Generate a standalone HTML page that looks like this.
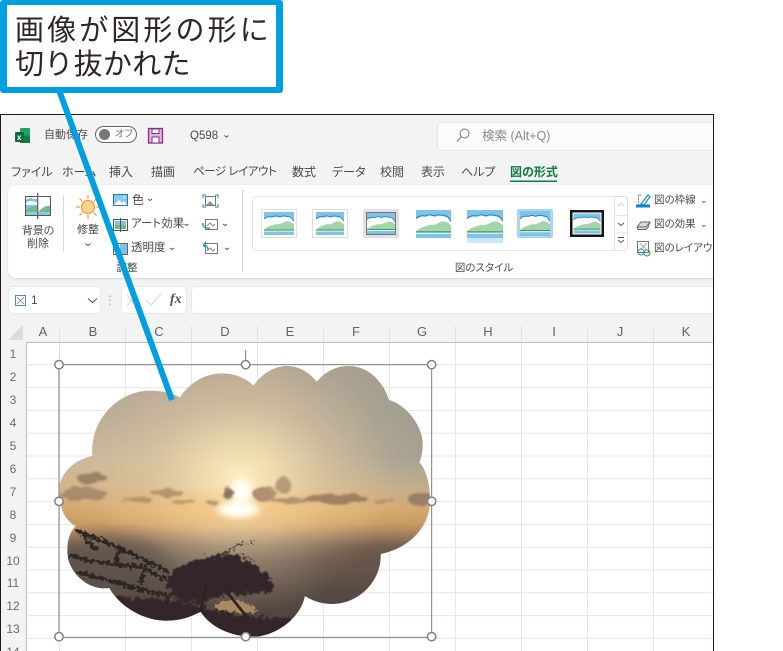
<!DOCTYPE html>
<html lang="ja"><head><meta charset="utf-8"><title>図の形式</title>
<style>
html,body{margin:0;padding:0;background:#fff}
body{width:783px;height:651px;position:relative;overflow:hidden;font-family:"Liberation Sans","Noto Sans CJK JP",sans-serif}
svg{position:absolute;display:block}
#win{position:absolute;left:0;top:114px;width:714px;height:537px;background:#f3f3f3;border:solid #231815;border-width:1.5px 1.5px 0 1.5px;box-sizing:border-box}
.p{position:absolute;background:#fff;box-sizing:border-box}
.t{position:absolute;white-space:nowrap;font-size:11px;line-height:14px;color:#4a4a4a;font-feature-settings:"palt"}
.tb{font-size:12px}
.c{transform:translateX(-50%)}
.h{color:#5a6470;font-size:13px;line-height:16px}
.r{color:#6a6a72;font-size:12px;line-height:14px}
#clip{position:absolute;left:0;top:0;width:713px;height:651px;overflow:hidden}
#call{position:absolute;left:0;top:0;width:283px;height:93px;box-sizing:border-box;background:#fff;border:solid #00a0e0;border-width:5.5px 7px 6.5px 7px;border-radius:3px}
.ct{position:absolute;left:15px;white-space:nowrap;font-size:29px;line-height:34px;color:#2f2725}
</style></head><body>
<div id="win"></div>
<div id="clip">
<div class="p" style="left:437px;top:122px;width:290px;height:29px;border:1px solid #e6e6e6;border-radius:5px;background:#fbfbfb"></div>
<div class="p" style="left:8px;top:185px;width:720px;height:93px;border-radius:8px;box-shadow:0 1px 2px #d5d5d5"></div>
<div class="p" style="left:252px;top:196px;width:376px;height:55px;border:1px solid #e5e5e5;border-radius:4px"></div>
<div class="p" style="left:8px;top:286px;width:93px;height:28px;border:1px solid #e8e8e8;border-radius:5px"></div>
<div class="p" style="left:121px;top:286px;width:66px;height:28px;border:1px solid #e8e8e8;border-radius:5px"></div>
<div class="p" style="left:191px;top:286px;width:540px;height:28px;border:1px solid #e8e8e8;border-radius:5px"></div>
<div class="p" style="left:27px;top:342px;width:687px;height:309px"></div>

<svg style="left:0;top:0" width="783" height="651" viewBox="0 0 783 651">
<defs>
<symbol id="th" viewBox="0 0 28 21" preserveAspectRatio="none">
<rect width="28" height="21" fill="#fff"/>
<rect width="28" height="8" fill="#7fc3ea"/>
<path d="M0 6.500C3 3.500 6 4.500 8 4.500C11 2.500 13 4.500 15 4.500C18 2.500 22 4.500 24 4.500C26 5 27 7 28 8.500V16H0Z" fill="#fff"/>
<path d="M0 6.500C3 3.500 6 4.500 8 4.500C11 2.500 13 4.500 15 4.500C18 2.500 22 4.500 24 4.500C26 5 27 7 28 8.500" fill="none" stroke="#1a86c8" stroke-width=".9"/>
<path d="M0 16C4 12.500 8 12.500 11 11C14 12 17 10 21 8.500C24 8.500 26 9.500 28 11.500V17H0Z" fill="#a3d4ab"/>
<rect y="16" width="28" height=".9" fill="#2f9a58"/>
<rect y="17.800" width="28" height="3.200" fill="#7fc3ea"/>
</symbol>
</defs>
<!-- Excel icon -->
<rect x="20" y="128" width="10" height="15" rx="1" fill="#21a366"/>
<rect x="20" y="135.500" width="10" height="7.500" fill="#107c41"/>
<rect x="15" y="132" width="9" height="10" rx="1" fill="#0e6b3a"/>
<text x="17" y="140" font-size="8" fill="#fff" font-family="Liberation Sans" font-weight="bold">x</text>
<!-- toggle -->
<rect x="95.500" y="126.500" width="41" height="16" rx="8" fill="#fff" stroke="#666"/>
<circle cx="104.500" cy="134.500" r="5.500" fill="#777"/>
<!-- save -->
<rect x="148.500" y="128.500" width="14" height="14.500" fill="#d9b3d9" stroke="#8a2f8a" stroke-width="1.300"/>
<rect x="152" y="129" width="7" height="4.500" fill="#fff" stroke="#8a2f8a"/>
<rect x="152" y="137" width="7" height="6" fill="#fff" stroke="#8a2f8a"/>
<path d="M224.500 135.500l2 1.500 2-1.500" fill="none" stroke="#555"/>
<!-- search -->
<circle cx="464.500" cy="133.500" r="4.500" fill="none" stroke="#777"/>
<path d="M461 137l-4 4.500" stroke="#777" fill="none"/>
<!-- active tab underline -->
<rect x="510" y="180.500" width="47" height="1.500" fill="#0f7b44"/>
<!-- remove bg -->
<rect x="25.500" y="196.500" width="25" height="19" fill="#fff" stroke="#555"/>
<path d="M26 200C30 196 34 200 37 199V214H26Z" fill="#7fc0e6"/>
<path d="M26 203C30 199 33 202 37 202V205H26Z" fill="#fff"/>
<path d="M26 211C30 206 34 207 37 206V212H26ZM39 211C43 207 47 205 50 206V212H39Z" fill="#74b98a"/>
<rect x="26" y="212" width="24" height="3" fill="#8cc8ea"/>
<rect x="37" y="193" width="1.300" height="26" fill="#666"/>
<rect x="63" y="195" width="1" height="57" fill="#d8d8d8"/>
<!-- sun -->
<circle cx="88" cy="207" r="6.500" fill="#fdd28f" stroke="#f08a24"/>
<path d="M88 195v4M88 215v4M76 207h4M96 207h4M79.500 198.500l3 3M96.500 198.500l-3 3M79.500 215.500l3-3M96.500 215.500l-3-3" stroke="#f08a24" fill="none"/>
<path d="M85.500 243.500l2.500 2 2.500-2" fill="none" stroke="#555"/>
<!-- small icons -->
<g>
<rect x="113.500" y="194.500" width="14" height="11" fill="#8cc8ea" stroke="#1a7fc0"/>
<path d="M114 205l5-5 3 3 2-2 3 4z" fill="#fff"/>
<circle cx="124" cy="197.500" r="1" fill="#fff"/>
<rect x="113.500" y="219.500" width="14" height="11" fill="#fff" stroke="#555"/>
<rect x="115" y="221" width="11" height="4" fill="#7fc3ea"/>
<rect x="115" y="225" width="11" height="4" fill="#74b98a"/>
<rect x="120" y="218" width="1" height="14" fill="#555"/>
<rect x="113.500" y="243.500" width="14" height="11" fill="#fff" stroke="#666"/>
<rect x="120" y="244" width="7" height="10" fill="#7fc0e6"/>
<path d="M148 199l2 1.500 2-1.500M184.500 224l2 1.500 2-1.500M170 248l2 1.500 2-1.500" fill="none" stroke="#555"/>
<rect x="205.500" y="196.500" width="10" height="9" fill="#fff" stroke="#777"/>
<path d="M206 205l4-4 4 4z" fill="#999"/>
<path d="M203 198v-3h3M218 198v-3h-3M203 204v3h3M218 204v3h-3" fill="none" stroke="#1a7fc0"/>
<rect x="205.500" y="219.500" width="12" height="10" fill="#fff" stroke="#777"/>
<path d="M207 226l3-3 3 3 2-2" fill="none" stroke="#888"/>
<path d="M203 223c-1 4 4 6 7 5" fill="none" stroke="#1a8fd0" stroke-width="1.300"/>
<rect x="205.500" y="243.500" width="12" height="10" fill="#fff" stroke="#777"/>
<path d="M207 251l3-3 3 3 2-2" fill="none" stroke="#888"/>
<path d="M203 245l3-3M203 245l3 3M203 245c4 0 5 2 5 5" fill="none" stroke="#1a8fd0" stroke-width="1.100"/>
<path d="M223 224l2 1.500 2-1.500M225 248l2 1.500 2-1.500" fill="none" stroke="#555"/>
</g>
<rect x="242" y="190" width="1" height="82" fill="#d8d8d8"/>
<!-- gallery -->
<rect x="261.500" y="209.500" width="35" height="28" fill="#fff" stroke="#e0e0e0"/><use href="#th" x="264" y="212" width="30" height="23"/>
<rect x="312.500" y="209.500" width="35" height="28" fill="#fff" stroke="#ddd"/><use href="#th" x="316" y="212" width="28" height="23"/>
<rect x="363" y="209" width="36" height="29" fill="#e2e2e2"/><rect x="366.500" y="212.500" width="29" height="22" fill="#fff" stroke="#777"/><use href="#th" x="367" y="213" width="28" height="21"/>
<use href="#th" x="416" y="210" width="35" height="28"/>
<use href="#th" x="467" y="210" width="36" height="28"/>
<rect x="467" y="238" width="36" height="5" fill="#cbe7f5"/>
<rect x="517" y="209" width="36" height="29" rx="2" fill="#a9d6ee"/><use href="#th" x="520" y="211" width="30" height="25"/>
<rect x="570" y="210" width="34" height="27" fill="#1c1414"/><rect x="572.500" y="212.500" width="29" height="22" fill="#fff"/><use href="#th" x="573.500" y="213.500" width="27" height="20"/>
<rect x="614.500" y="196.500" width="13" height="54" rx="2" fill="#fff" stroke="#e2e2e2"/>
<path d="M615 215.500h12M615 233h12" stroke="#e2e2e2"/>
<path d="M618 206l3-2.500 3 2.500" fill="none" stroke="#ccc"/>
<path d="M618 223l3 2.500 3-2.500" fill="none" stroke="#555"/>
<path d="M618 237.500h6M618 240l3 2.500 3-2.500" fill="none" stroke="#555"/>
<!-- right icons -->
<path d="M638.500 206v-11h4" fill="none" stroke="#888" stroke-dasharray="2 1"/>
<path d="M641 204l7-9 2 1.500-6 8.500z" fill="#fff" stroke="#1a8fd0" stroke-width="1.200"/>
<rect x="636" y="204.500" width="14" height="3" fill="#0a86cc"/>
<path d="M637 227l4-5h9l-2 5.500-2 2h-8z" fill="#ddd" stroke="#666"/>
<path d="M637 227h9l4-5" fill="none" stroke="#666"/>
<rect x="637.500" y="241.500" width="11" height="11" fill="#fff" stroke="#777"/>
<path d="M640 243l7 7M647 243l-7 7" stroke="#aaa"/>
<circle cx="641" cy="252" r="3" fill="none" stroke="#1a8fd0"/>
<circle cx="647" cy="253" r="3" fill="none" stroke="#23a05a"/>
<!-- name box etc -->
<rect x="15.500" y="295.500" width="10" height="10" fill="#fff" stroke="#3a8fc6"/>
<path d="M17 297l7 7M24 297l-7 7" stroke="#999"/>
<path d="M88 298.500l4.500 4 4.500-4" fill="none" stroke="#555" stroke-width="1.100"/>
<path d="M110 295.500v1.500M110 299.500v1.500M110 303.500v1.500" stroke="#aaa" stroke-width="1.300"/>
<path d="M127 295l9 11M136 295l-9 11" stroke="#d5d5d5" fill="none"/>
<path d="M146 300l5 5 10-11" stroke="#d5d5d5" fill="none"/>
<!-- corner triangle -->
<path d="M23 325v15H8z" fill="#dcdcdc"/>
<!-- grid -->
<g stroke="#e6e6e6" fill="none">
<path d="M59.500 342V651M125.500 342V651M191.500 342V651M257.500 342V651M323.500 342V651M389.500 342V651M455.500 342V651M521.500 342V651M587.500 342V651M653.500 342V651"/>
<path d="M27 364.800H714M27 387.600H714M27 410.400H714M27 433.200H714M27 456H714M27 478.800H714M27 501.600H714M27 524.400H714M27 547.200H714M27 570H714M27 592.800H714M27 615.600H714M27 638.400H714"/>
</g>
<g stroke="#e2e2e2" fill="none">
<path d="M59.500 326V341M125.500 326V341M191.500 326V341M257.500 326V341M323.500 326V341M389.500 326V341M455.500 326V341M521.500 326V341M587.500 326V341M653.500 326V341"/>
</g>
<path d="M27 342.500H714M26.500 342V651" stroke="#bdbdbd" fill="none"/>
</svg>

<span class="t" style="left:44px;top:128px">自動保存</span>
<span class="t" style="left:115px;top:128px;font-size:10px;color:#777">オフ</span>
<span class="t" style="left:190px;top:129px;font-size:11.500px">Q598</span>
<span class="t" style="left:482px;top:129px;font-size:12.500px;color:#8a8a8a">検索 (Alt+Q)</span>
<span class="t tb" style="left:11px;top:165px">ファイル</span>
<span class="t tb" style="left:62px;top:165px">ホーム</span>
<span class="t tb" style="left:109px;top:165px">挿入</span>
<span class="t tb" style="left:151px;top:165px">描画</span>
<span class="t tb" style="left:193px;top:165px;font-size:11.500px;letter-spacing:-.45px">ページ レイアウト</span>
<span class="t tb" style="left:292px;top:165px">数式</span>
<span class="t tb" style="left:332px;top:165px">データ</span>
<span class="t tb" style="left:380px;top:165px">校閲</span>
<span class="t tb" style="left:421px;top:165px">表示</span>
<span class="t tb" style="left:461px;top:165px">ヘルプ</span>
<span class="t tb" style="left:510px;top:165px;color:#0f7b44;font-weight:bold">図の形式</span>
<span class="t c" style="left:38px;top:224px">背景の</span>
<span class="t c" style="left:38px;top:237px">削除</span>
<span class="t c" style="left:88px;top:223px">修整</span>
<span class="t" style="left:132px;top:193px;font-size:12px">色</span>
<span class="t" style="left:131px;top:217px;font-size:11.500px">アート効果</span>
<span class="t" style="left:131px;top:241px;font-size:11.500px">透明度</span>
<span class="t c" style="left:127px;top:261px;font-size:10.500px">調整</span>
<span class="t c" style="left:484px;top:261px;font-size:10.500px">図のスタイル</span>
<span class="t" style="left:654px;top:193px;font-size:10.500px">図の枠線</span>
<span class="t" style="left:654px;top:217px;font-size:10.500px">図の効果</span>
<span class="t" style="left:654px;top:241px;font-size:10.500px">図のレイアウト</span>
<span class="t" style="left:700px;top:193px;font-size:9px">⌄</span>
<span class="t" style="left:700px;top:217px;font-size:9px">⌄</span>
<span class="t" style="left:31px;top:293px;font-size:12px">1</span>
<span class="t" style="left:170px;top:291px;font-size:14px;line-height:18px;font-family:'Liberation Serif',serif;font-style:italic;font-weight:bold;color:#555">fx</span>

<span class="t c h" style="left:43px;top:324px">A</span>
<span class="t c h" style="left:93px;top:324px">B</span>
<span class="t c h" style="left:159px;top:324px">C</span>
<span class="t c h" style="left:225px;top:324px">D</span>
<span class="t c h" style="left:290px;top:324px">E</span>
<span class="t c h" style="left:356px;top:324px">F</span>
<span class="t c h" style="left:422px;top:324px">G</span>
<span class="t c h" style="left:488px;top:324px">H</span>
<span class="t c h" style="left:554px;top:324px">I</span>
<span class="t c h" style="left:620px;top:324px">J</span>
<span class="t c h" style="left:686px;top:324px">K</span>
<span class="t c r" style="left:13px;top:347px">1</span>
<span class="t c r" style="left:13px;top:370px">2</span>
<span class="t c r" style="left:13px;top:393px">3</span>
<span class="t c r" style="left:13px;top:416px">4</span>
<span class="t c r" style="left:13px;top:439px">5</span>
<span class="t c r" style="left:13px;top:462px">6</span>
<span class="t c r" style="left:13px;top:485px">7</span>
<span class="t c r" style="left:13px;top:508px">8</span>
<span class="t c r" style="left:13px;top:531px">9</span>
<span class="t c r" style="left:13px;top:554px">10</span>
<span class="t c r" style="left:13px;top:576px">11</span>
<span class="t c r" style="left:13px;top:599px">12</span>
<span class="t c r" style="left:13px;top:622px">13</span>
<span class="t c r" style="left:13px;top:645px">14</span>
</div>

<!-- picture -->
<svg style="left:40px;top:350px" width="410" height="301" viewBox="0 0 1230 903">
<defs>
<clipPath id="cloud"><path d="M157 318C148 205 240 122 330 122C368 122 398 130 420 142C450 95 500 70 545 70C585 70 620 85 640 107C670 65 710 48 740 48C780 48 810 70 830 95C860 60 895 48 925 48C985 48 1030 95 1047 150C1100 165 1150 230 1148 285C1148 305 1145 320 1138 337C1160 360 1172 410 1170 460C1168 520 1120 592 1022 612C1025 690 960 762 875 762C850 762 820 755 795 738C780 810 700 860 640 860C570 860 510 830 482 785C450 802 420 812 380 812C310 812 240 770 208 714C190 716 180 714 170 712C120 700 80 650 82 600C82 570 90 545 107 528C70 510 55 460 57 420C60 370 100 330 157 318Z"/></clipPath>
<linearGradient id="v" gradientUnits="userSpaceOnUse" x1="0" y1="40" x2="0" y2="870">
<stop offset="0" stop-color="#b3a592"/><stop offset=".2" stop-color="#bdae98"/><stop offset=".35" stop-color="#ccb99b"/><stop offset=".45" stop-color="#d4b68c"/><stop offset=".53" stop-color="#d3a670"/><stop offset=".58" stop-color="#c89a64"/><stop offset=".62" stop-color="#a47f5c"/><stop offset=".66" stop-color="#776353"/><stop offset=".72" stop-color="#5f5149"/><stop offset="1" stop-color="#4c403c"/>
</linearGradient>
<linearGradient id="sideR" gradientUnits="userSpaceOnUse" x1="700" y1="0" x2="1170" y2="0">
<stop offset="0" stop-color="#94968a" stop-opacity="0"/><stop offset="1" stop-color="#94968a" stop-opacity=".72"/>
</linearGradient>
<linearGradient id="fade" gradientUnits="userSpaceOnUse" x1="0" y1="0" x2="0" y2="900">
<stop offset="0" stop-color="#fff"/><stop offset=".36" stop-color="#fff"/><stop offset=".52" stop-color="#000"/>
</linearGradient>
<mask id="skyM" maskUnits="userSpaceOnUse" x="0" y="0" width="1230" height="900"><rect width="1230" height="900" fill="url(#fade)"/></mask>
<radialGradient id="glow"><stop offset="0" stop-color="#fff3c8" stop-opacity=".95"/><stop offset=".25" stop-color="#f9e4b4" stop-opacity=".75"/><stop offset=".6" stop-color="#ead2a8" stop-opacity=".35"/><stop offset="1" stop-color="#e2c9a2" stop-opacity="0"/></radialGradient>
<radialGradient id="glowB"><stop offset="0" stop-color="#f5c47c" stop-opacity=".7"/><stop offset="1" stop-color="#f3c078" stop-opacity="0"/></radialGradient>
<filter id="b8" x="-50%" y="-50%" width="200%" height="200%"><feGaussianBlur stdDeviation="10"/></filter>
<filter id="rc" x="-20%" y="-50%" width="140%" height="200%"><feTurbulence type="fractalNoise" baseFrequency=".025 .06" numOctaves="2" seed="4" result="n"/><feDisplacementMap in="SourceGraphic" in2="n" scale="22" xChannelSelector="R" yChannelSelector="G"/><feGaussianBlur stdDeviation="3.500"/></filter>
<filter id="rt" x="-20%" y="-30%" width="140%" height="160%"><feTurbulence type="fractalNoise" baseFrequency=".07" numOctaves="3" seed="9" result="n"/><feDisplacementMap in="SourceGraphic" in2="n" scale="38" xChannelSelector="R" yChannelSelector="G"/><feGaussianBlur stdDeviation="1.200"/></filter>
<filter id="rl" x="-20%" y="-30%" width="140%" height="160%"><feTurbulence type="fractalNoise" baseFrequency=".09" numOctaves="2" seed="3" result="n"/><feDisplacementMap in="SourceGraphic" in2="n" scale="26" xChannelSelector="R" yChannelSelector="G"/><feGaussianBlur stdDeviation="1"/></filter>
<filter id="b30" x="-50%" y="-50%" width="200%" height="200%"><feGaussianBlur stdDeviation="22"/></filter>
</defs>
<g clip-path="url(#cloud)">
<rect y="40" width="1230" height="830" fill="url(#v)"/>
<rect width="1230" height="900" fill="url(#sideR)" mask="url(#skyM)"/>
<ellipse cx="600" cy="390" rx="460" ry="400" fill="url(#glow)"/>
<ellipse cx="600" cy="480" rx="560" ry="75" fill="url(#glowB)"/>
<ellipse cx="1030" cy="640" rx="220" ry="50" fill="#6d5a4c" opacity=".5" filter="url(#b30)"/>
<!-- clouds -->
<g filter="url(#rc)" opacity=".88">
<ellipse cx="155" cy="384" rx="46" ry="16" fill="#947a60"/>
<ellipse cx="130" cy="432" rx="72" ry="19" fill="#a28768"/>
<ellipse cx="380" cy="428" rx="46" ry="10" fill="#ad8e6a"/>
<ellipse cx="290" cy="448" rx="44" ry="8" fill="#b08f66"/>
<ellipse cx="430" cy="456" rx="36" ry="6" fill="#bd9866"/>
<ellipse cx="520" cy="458" rx="18" ry="7" fill="#a98a68"/>
<ellipse cx="565" cy="430" rx="17" ry="16" fill="#8a745e"/>
<ellipse cx="672" cy="432" rx="34" ry="26" fill="#a98e6c"/>
<ellipse cx="728" cy="405" rx="24" ry="23" fill="#ad9372"/>
<ellipse cx="745" cy="452" rx="60" ry="9" fill="#a98e6c"/>
<ellipse cx="890" cy="447" rx="95" ry="15" fill="#94795f"/>
<ellipse cx="1030" cy="452" rx="30" ry="6" fill="#a88c6c"/>
<ellipse cx="1140" cy="447" rx="36" ry="19" fill="#917b65"/>
</g>
<!-- sun -->
<g filter="url(#b8)">
<ellipse cx="605" cy="425" rx="34" ry="36" fill="#fff8dc"/>
<ellipse cx="595" cy="478" rx="66" ry="24" fill="#fff8dc"/>
</g>
<ellipse cx="605" cy="422" rx="24" ry="28" fill="#fff" filter="url(#b8)"/>
<ellipse cx="595" cy="478" rx="46" ry="16" fill="#fff" filter="url(#b8)"/>
<ellipse cx="565" cy="430" rx="15" ry="14" fill="#8a745e" filter="url(#rc)"/>
<ellipse cx="665" cy="432" rx="26" ry="20" fill="#ad9170" filter="url(#rc)"/>
<!-- left lobe foliage -->
<ellipse cx="220" cy="650" rx="170" ry="90" fill="#5f5450" opacity=".6" filter="url(#b30)"/>
<g filter="url(#rl)" fill="none" stroke="#2f2624" stroke-width="12">
<path d="M105 540L200 578L290 618L385 665"/>
<path d="M85 618L200 640L300 650L380 690"/>
<path d="M110 665L200 690L290 715L390 740"/>
<path d="M130 560L170 600M240 590L230 640M320 640L300 700"/>
</g>
<!-- tree -->
<g filter="url(#rt)" fill="#33272a">
<path d="M375 700C395 650 450 630 500 625C550 600 610 615 650 650C690 680 710 700 695 722C650 738 600 728 540 738C480 770 400 770 375 700Z"/>
<path d="M200 735L300 745L400 750L500 775L600 795L770 810L750 880L200 880Z"/>
</g>
<path d="M530 762C560 738 615 745 655 785L600 790L520 775Z" fill="#a98a5f" filter="url(#rl)"/>
<path d="M500 700L480 790M560 725L620 800" stroke="#2b2022" stroke-width="8" fill="none"/>
<g filter="url(#rl)" fill="none" stroke="#4a3a36" stroke-width="3"><path d="M540 625L590 585L640 578M600 605L650 640"/></g>
</g>
<!-- selection frame -->
<path d="M617 0V30" stroke="#7f7f7f" stroke-width="3"/>
<rect x="57" y="44" width="1118" height="818" fill="none" stroke="#7f7f7f" stroke-width="3"/>
<g fill="#fff" stroke="#7f7f7f" stroke-width="4.500">
<circle cx="57" cy="44" r="12.500"/><circle cx="617" cy="44" r="12.500"/><circle cx="1175" cy="44" r="12.500"/>
<circle cx="57" cy="454" r="12.500"/><circle cx="1175" cy="454" r="12.500"/>
<circle cx="57" cy="860" r="12.500"/><circle cx="617" cy="860" r="12.500"/><circle cx="1175" cy="860" r="12.500"/>
</g>
</svg>

<!-- callout line -->
<svg style="left:0;top:0" width="783" height="651" viewBox="0 0 783 651">
<path d="M59 90L172 400" stroke="#00a0e0" stroke-width="6" fill="none"/>
</svg>
<div id="call"></div>
<div class="ct" style="top:14px;letter-spacing:3.100px">画像が図形の形に</div>
<div class="ct" style="top:48px;letter-spacing:.3px">切り抜かれた</div>
</body></html>
